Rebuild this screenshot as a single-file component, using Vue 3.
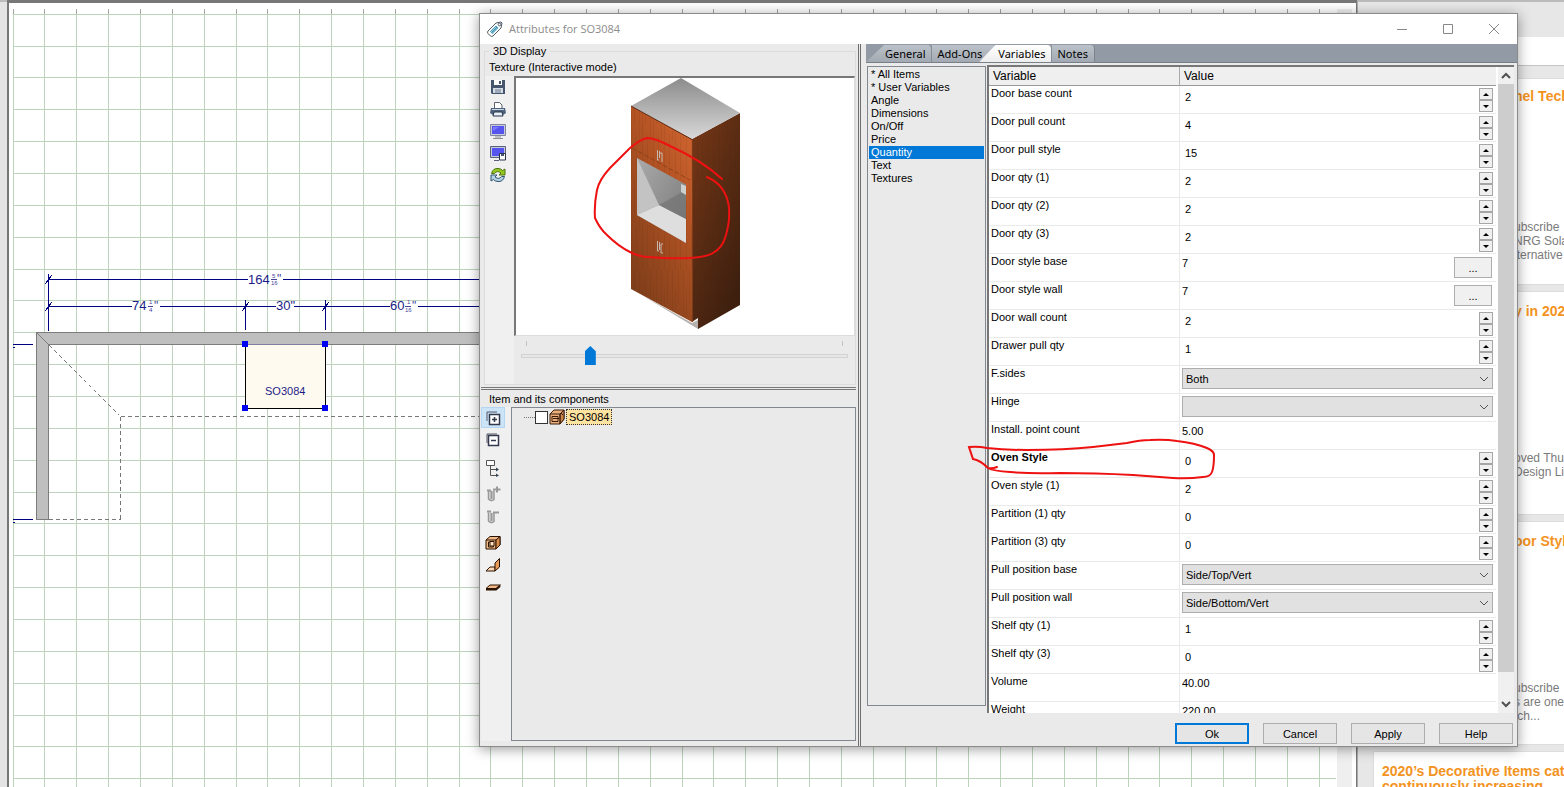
<script setup>
import { ref } from 'vue'

const cell = 31.86
const columns = Array.from({ length: 42 }, (_, i) => Math.floor(13 + i * cell) + 0.5)
const lines = Array.from({ length: 30 }, (_, i) => Math.floor(14.2 + i * cell) + 0.5)

const tabs = ['General', 'Add-Ons', 'Variables', 'Notes']
const groups = ['* All Items', '* User Variables', 'Angle', 'Dimensions', 'On/Off', 'Price', 'Quantity', 'Text', 'Textures']
const rows = ref([
  { name: 'Door base count', kind: 'spin', value: '2' },
  { name: 'Door pull count', kind: 'spin', value: '4' },
  { name: 'Door pull style', kind: 'spin', value: '15' },
  { name: 'Door qty (1)', kind: 'spin', value: '2' },
  { name: 'Door qty (2)', kind: 'spin', value: '2' },
  { name: 'Door qty (3)', kind: 'spin', value: '2' },
  { name: 'Door style base', kind: 'browse', value: '7' },
  { name: 'Door style wall', kind: 'browse', value: '7' },
  { name: 'Door wall count', kind: 'spin', value: '2' },
  { name: 'Drawer pull qty', kind: 'spin', value: '1' },
  { name: 'F.sides', kind: 'select', value: 'Both' },
  { name: 'Hinge', kind: 'select', value: '' },
  { name: 'Install. point count', kind: 'text', value: '5.00' },
  { name: 'Oven Style', kind: 'spin', value: '0', bold: true },
  { name: 'Oven style (1)', kind: 'spin', value: '2' },
  { name: 'Partition (1) qty', kind: 'spin', value: '0' },
  { name: 'Partition (3) qty', kind: 'spin', value: '0' },
  { name: 'Pull position base', kind: 'select', value: 'Side/Top/Vert' },
  { name: 'Pull position wall', kind: 'select', value: 'Side/Bottom/Vert' },
  { name: 'Shelf qty (1)', kind: 'spin', value: '1' },
  { name: 'Shelf qty (3)', kind: 'spin', value: '0' },
  { name: 'Volume', kind: 'text', value: '40.00' },
  { name: 'Weight', kind: 'text', value: '220.00' }
])
const angle = ref(20)
const step = (row, by) => { row.value = String(Number(row.value) + by) }

const news = [
  { title: 'nel Tech', lines: ['ubscribe', 'NRG Sola', 'lternative'] },
  { title: 'y in 2020', lines: ['oved Thu', 'Design Liv'] },
  { title: 'oor Styl', lines: ['ubscribe', 's are one', 'tch...'] }
]
</script>

<template>
  <div class="desk">
    <div class="strip"></div>
    <main class="plan">
      <svg class="drawing" aria-label="Floor plan">
        <g class="grid">
          <line v-for="x in columns" :key="'c' + x" :x1="x" :x2="x" y1="9" y2="100%" />
          <line v-for="y in lines" :key="'r' + y" x1="13" x2="100%" :y1="y" :y2="y" />
        </g>
        <g class="ticks">
          <line v-for="x in columns" :key="'t' + x" :x1="x" :x2="x" y1="9" y2="14" />
        </g>
        <g class="wall">
          <path d="M36.500 332.500H600V344.500H48.500V519.500H36.500ZM36.500 332.500L48.500 344.500" />
        </g>
        <path class="dash" d="M49 345L119 415M120.500 416.500H600M120.500 416.500V519.500M49 519.500H120.500" />
        <path class="unit" d="M245.500 344.500H325.500V408.500H245.500Z" />
        <path class="wall-edge" d="M246 344.500H325" />
        <g class="dim">
          <path d="M48.500 274V331M245.500 300V330M325.500 300V330M49 279.500H248M283 279.500H600M49 306.500H132M160 306.500H276M294 306.500H390M418 306.500H600M13 344.500H33M13 519.500H33M13 347.500H15M13 522.500H15M45 284L52 275M45 311L52 302M242 311L249 302M322 311L329 302" />
        </g>
        <g class="handle">
          <rect x="242" y="341" width="6" height="6" /><rect x="322" y="341" width="6" height="6" />
          <rect x="242" y="405" width="6" height="6" /><rect x="322" y="405" width="6" height="6" />
        </g>
        <g class="figures">
          <text x="248" y="284">164</text><text x="132" y="310">74</text>
          <text x="276" y="310">30"</text><text x="390" y="310">60</text>
          <text class="unit-name" x="265" y="395">SO3084</text>
        </g>
        <g class="fractions">
          <text x="272" y="278">5</text><text x="271" y="285">16</text><text class="inch" x="277" y="283">"</text>
          <text x="149" y="304">1</text><text x="149" y="312">4</text><text class="inch" x="154" y="310">"</text>
          <text x="407" y="304">1</text><text x="405" y="312">16</text><text class="inch" x="412" y="310">"</text>
          <path d="M271 279.500H277M148 306.500H153M405 306.500H411" />
        </g>
      </svg>
      <div class="plan-scroll"></div>
    </main>

    <aside class="side">
      <h2 class="side-title">Shared R</h2>
      <div class="side-band"></div>
      <div class="cards">
        <article v-for="n in news" :key="n.title" class="card">
          <h3><a href="#">{{ n.title }}</a></h3>
          <p><span v-for="l in n.lines" :key="l">{{ l }}</span></p>
        </article>
        <article class="card last">
          <h3><a href="#">2020’s Decorative Items cat<br>continuously increasing</a></h3>
        </article>
      </div>
    </aside>

    <section class="dialog" role="dialog" aria-labelledby="dlg-title">
      <header class="titlebar">
        <svg class="tag" width="18" height="18" viewBox="0 0 18 18">
          <path d="M2 11L10 3L15 2L16 3L15 8L7 16Q5.500 17 4.500 16L2 13.500Q1 12 2 11Z" fill="#fff" stroke="#4e5a66" />
          <path d="M4 11.500L10 5.500L12.500 8L6.500 14Z" fill="#3f93b8" /><path d="M5 12L10 7M6.500 13L11.500 8" stroke="#9ed0e4" />
          <circle cx="13.500" cy="4.500" r="1.300" fill="#fff" stroke="#4e5a66" />
        </svg>
        <h1 id="dlg-title">Attributes for SO3084</h1>
        <button class="win" aria-label="Minimize"><svg width="12" height="12"><path d="M1 6.500H11" /></svg></button>
        <button class="win" aria-label="Maximize"><svg width="12" height="12"><path d="M1.500 1.500H10.500V10.500H1.500Z" /></svg></button>
        <button class="win" aria-label="Close"><svg width="12" height="12"><path d="M1 1L11 11M11 1L1 11" /></svg></button>
      </header>

      <div class="body">
        <div class="left">
          <fieldset class="display">
            <legend>3D Display</legend>
            <p class="mode">Texture (Interactive mode)</p>
            <div class="display-row">
              <div class="tools">
                <button aria-label="Save"><svg width="16" height="16" viewBox="0 0 16 16"><path d="M1 1H15V15H2L1 14Z" fill="#46566e" /><path d="M4 1H12V6H4Z" fill="#fff" /><path d="M9 2H11V5H9Z" fill="#46566e" /><path d="M3 9H13V14H3Z" fill="#d5dbe3" /><path d="M5 11H11M5 13H11" stroke="#6b7b92" /></svg></button>
                <button aria-label="Print"><svg width="16" height="16" viewBox="0 0 16 16"><path d="M4.500 7V1.500H9.500L12 4V7" fill="#fff" stroke="#59636f" /><path d="M1 7H15L16 12L13 14H3L0 12Z" fill="#4f627c" /><path d="M2 8.500H14" stroke="#c9d6e6" /><path d="M4 11H12L13 15H3Z" fill="#e8f0f8" stroke="#26344a" /></svg></button>
                <button aria-label="Monitor"><svg width="16" height="16" viewBox="0 0 16 16"><path d="M.5 1.500H15.500V12.500H.5Z" fill="#c8ccd8" stroke="#8085a0" /><path d="M2 3H14V11H2Z" fill="#5654ee" /><path d="M3 4H9L3 8Z" fill="#7b7aff" /><path d="M5 14H11M3 15.500H13" stroke="#8a8f96" /></svg></button>
                <button aria-label="Save view"><svg width="16" height="16" viewBox="0 0 16 16"><path d="M.5 1.500H15.500V12.500H.5Z" fill="#c8ccd8" stroke="#59607c" /><path d="M2 3H14V11H2Z" fill="#5654ee" /><path d="M4 15.500H9" stroke="#59607c" /><path d="M9.500 8.500H15.500V15H9.500Z" fill="#fff" stroke="#28334a" /><path d="M11 9H14V11H11Z" fill="#46566e" /></svg></button>
                <button aria-label="Refresh"><svg width="16" height="16" viewBox="0 0 16 16"><path d="M1.500 6.500Q3 1 8 1.500Q11 1.500 12.500 3.500L15 2V8H9L11 6Q7 3 4.500 6.500Z" fill="#94c81e" stroke="#4c7410" /><path d="M14.500 9.500Q13 15 8 14.500Q5 14.500 3.500 12.500L1 14V8H7L5 10Q9 13 11.500 9.500Z" fill="#b4d2e6" stroke="#35556d" /></svg></button>
              </div>
              <div class="stage">
                <div class="view">
                  <svg width="338" height="257" viewBox="0 0 338 257" aria-label="Oven cabinet">
                    <defs>
                      <linearGradient id="top" x1="0" y1="0" x2="0" y2="1"><stop offset="0" stop-color="#8c8c8c" /><stop offset="1" stop-color="#d8d8d8" /></linearGradient>
                      <linearGradient id="front" x1="0.800" y1="0" x2="0.200" y2="1"><stop offset="0" stop-color="#cf6530" /><stop offset=".3" stop-color="#b75525" /><stop offset="1" stop-color="#7a3c19" /></linearGradient>
                      <linearGradient id="right" x1="0" y1="0" x2=".6" y2="1"><stop offset="0" stop-color="#7a3817" /><stop offset=".5" stop-color="#5a2c13" /><stop offset="1" stop-color="#3f200f" /></linearGradient>
                      <linearGradient id="inner" x1="0" y1="0" x2="1" y2="1"><stop offset="0" stop-color="#aaa" /><stop offset="1" stop-color="#777" /></linearGradient>
                      <pattern id="grain" width="11" height="90" patternUnits="userSpaceOnUse"><path d="M1.500 0V50M4.500 20V90M7.500 0V34M9.500 45V90" stroke="#3a1400" opacity=".08" /></pattern>
                    </defs>
                    <g transform="translate(-516 -78)">
                      <path d="M640 294L698 329L698 320L692 323Z" fill="#b5b2ae" />
                      <path d="M692 139L740 113V305L698 329V318L692 322Z" fill="url(#right)" />
                      <path d="M692 139L740 113V305L698 329V318L692 322Z" fill="url(#grain)" />
                      <path d="M631 106L692 139V322L631 289Z" fill="url(#front)" />
                      <path d="M631 106L692 139V322L631 289Z" fill="url(#grain)" />
                      <path d="M681 78L740 113L692 139L631 106Z" fill="url(#top)" />
                      <path d="M631 106L692 139.500" stroke="#5a2a12" fill="none" />
                      <path d="M692.500 140V322" stroke="#7c3a18" fill="none" />
                      <path d="M632 148L690 180" stroke="#7f3513" fill="none" stroke-dasharray="5 2" opacity=".6" />
                      <path d="M637 158L686 184.500V243L637 215Z" fill="url(#inner)" />
                      <path d="M637 158L659 205L637 215Z" fill="#c3c3c3" />
                      <path d="M637 215L659 205L686 219V243Z" fill="#dedede" />
                      <path d="M659 205L686 190V219Z" fill="#737373" opacity=".7" />
                      <path d="M681 184L686 186V195L681 192Z" fill="#ccd0cf" />
                      <g fill="none" stroke="#c5b7af"><path d="M657.500 150V160H659M659.500 151V158M662 153V162M660 153H662" /><path d="M657.500 241V251H659M659.500 242V250M663 244H661V253H663" /></g>
                    </g>
                  </svg>
                </div>
                <div class="slider">
                  <div class="marks"><i></i><i></i></div>
                  <input v-model="angle" type="range" min="0" max="100" aria-label="View angle">
                </div>
              </div>
            </div>
          </fieldset>

          <fieldset class="items">
            <legend>Item and its components</legend>
            <div class="items-row">
              <div class="tools tall">
                <button class="on" aria-label="Expand all"><svg width="16" height="16" viewBox="0 0 16 16"><path d="M2 11V2H12" fill="none" stroke="#556" /><path d="M4.500 4.500H14.500V14.500H4.500Z" fill="#fff" stroke="#333a4d" stroke-width="1.500" /><path d="M7 9.500H12M9.500 7V12" stroke="#333a4d" stroke-width="1.500" /></svg></button>
                <button aria-label="Collapse all"><svg width="16" height="16" viewBox="0 0 16 16"><path d="M2 11V2H12" fill="none" stroke="#556" /><path d="M3.500 3.500H13.500V13.500H3.500Z" fill="#fff" stroke="#333a4d" stroke-width="1.500" /><path d="M6 8.500H11" stroke="#333a4d" stroke-width="1.500" /></svg></button>
                <button class="gap" aria-label="Structure"><svg width="16" height="18" viewBox="0 0 16 18"><path d="M1.500 1.500H9.500V6.500H1.500Z" fill="#fff" stroke="#555" /><path d="M5.500 7V16.500H13M5.500 10.500H13" fill="none" stroke="#555" /><path d="M11 8.500L14 10.500L11 12.500ZM11 14.500L14 16.500L11 18Z" fill="#345" /></svg></button>
                <button class="gap" aria-label="Add hardware"><svg width="16" height="16" viewBox="0 0 16 16"><path d="M3.500 4.500V13Q6 16 9 13.500V4.500" fill="#ddd" stroke="#999" stroke-width="1.500" /><path d="M6.500 5V13M2 4.500H6M8 3.500H15.500M12 .5V6.500" fill="none" stroke="#999" stroke-width="2" /></svg></button>
                <button aria-label="Remove hardware"><svg width="16" height="16" viewBox="0 0 16 16"><path d="M3.500 4.500V13Q6 16 9 13.500V4.500" fill="#ddd" stroke="#999" stroke-width="1.500" /><path d="M6.500 5V13M2 3.500H6M8 4.500H14" fill="none" stroke="#999" stroke-width="2" /></svg></button>
                <button class="gap" aria-label="Box"><svg width="16" height="16" viewBox="0 0 16 16" stroke="#2a1200" stroke-linejoin="round"><path d="M1 5L5 1.500H15V10L11 14H1Z" fill="#f0b987" /><path d="M1 5H11V14M11 5L15 1.500M3.500 7H8.500V12H3.500Z" fill="none" /><path d="M11 5L15 1.500V10L11 14Z" fill="#d98e4c" /><path d="M5 6.500H9V11H5Z" fill="#ffe2c4" /></svg></button>
                <button aria-label="Corner"><svg width="16" height="16" viewBox="0 0 16 16" stroke="#2a1200" stroke-linejoin="round"><path d="M1 14L5 10H10V14Z" fill="#ffd9b5" /><path d="M10 14V6L14.500 1.500V10Z" fill="#e89a58" /></svg></button>
                <button aria-label="Panel"><svg width="16" height="16" viewBox="0 0 16 16" stroke="#2a1200" stroke-linejoin="round"><path d="M1 9.500L5 6H15.500L11 9.500Z" fill="#f2b988" /><path d="M1 10.500H11L15 7" fill="none" stroke-width="2" /></svg></button>
              </div>
              <div class="tree" role="tree">
                <label class="node"><i></i><input type="checkbox">
                  <svg width="16" height="16" viewBox="0 0 16 16" stroke="#3a1c08" stroke-linejoin="round"><path d="M1 5L5 1H15V10L11 15H1Z" fill="#eab07c" /><path d="M11 5L15 1V10L11 15Z" fill="#cc8447" /><path d="M1 5H11V15M3 7.500H9V12.500H3ZM4 9.500H10M12 4L14 6" fill="none" /></svg>
                  <span>SO3084</span></label>
              </div>
            </div>
          </fieldset>
        </div>

        <div class="right">
          <nav class="tabs" role="tablist">
            <button v-for="t in tabs" :key="t" role="tab" :class="['tab', t.toLowerCase()]">{{ t }}</button>
          </nav>
          <div class="pane">
            <ul class="groups">
              <li v-for="g in groups" :key="g" :class="{ picked: g === 'Quantity' }">{{ g }}</li>
            </ul>
            <div class="sheet">
              <div class="sheet-view">
                <table>
                  <thead><tr><th>Variable</th><th>Value</th></tr></thead>
                  <tbody>
                    <tr v-for="(r, i) in rows" :key="r.name">
                      <td class="name" :class="{ bold: r.bold }"><label :for="'v' + i">{{ r.name }}</label></td>
                      <td>
                        <div v-if="r.kind === 'spin'" class="spin">
                          <input :id="'v' + i" v-model="r.value" type="text">
                          <span class="arrows">
                            <button :aria-label="'Increase ' + r.name" @click="step(r, 1)"><svg width="6" height="3"><path d="M0 3L3 0L6 3Z" /></svg></button>
                            <button :aria-label="'Decrease ' + r.name" @click="step(r, -1)"><svg width="6" height="3"><path d="M0 0L3 3L6 0Z" /></svg></button>
                          </span>
                        </div>
                        <div v-else-if="r.kind === 'select'" class="pick">
                          <select :id="'v' + i" v-model="r.value"><option>{{ r.value }}</option></select>
                          <svg width="10" height="6"><path d="M1 1L5 5L9 1" /></svg>
                        </div>
                        <div v-else class="plain">
                          <input :id="'v' + i" v-model="r.value" type="text">
                          <button v-if="r.kind === 'browse'" :aria-label="'Browse ' + r.name">...</button>
                        </div>
                      </td>
                    </tr>
                  </tbody>
                </table>
              </div>
              <div class="bar">
                <button aria-label="Scroll up"><svg width="10" height="7"><path d="M1 6L5 2L9 6" /></svg></button>
                <div class="bar-track"><div class="bar-thumb"></div></div>
                <button aria-label="Scroll down"><svg width="10" height="7"><path d="M1 1L5 5L9 1" /></svg></button>
              </div>
            </div>
          </div>
          <footer class="actions">
            <button class="main">Ok</button><button>Cancel</button><button>Apply</button><button>Help</button>
          </footer>
        </div>
      </div>
    </section>

    <svg class="marker">
      <path d="M722 179C708 166 690 155 670 146Q655 138 647 138Q641 139 630 148L610 168Q599 180 597 190Q594 205 595 218Q600 229 607 235Q618 246 630 252Q640 257 648 257Q670 259 690 258Q706 257 713 253Q722 248 725 238Q730 224 729 208Q728 198 723 190Q718 182 707 177" />
      <path d="M997 467Q992 469 988 468Q980 460 973 459L969 447Q978 446 987 448Q1005 450 1027 450Q1065 450 1093 447L1127 443Q1140 440 1150 440Q1165 439 1177 441Q1195 443 1207 448Q1214 451 1214 455Q1214 467 1212 472Q1210 477 1203 477Q1188 479 1173 478L1133 475Q1095 473 1060 473Q1030 474 1010 472Q993 471 988 468" />
    </svg>
  </div>
</template>

<style>
body { margin: 0; }
</style>

<style scoped>
* { box-sizing: border-box; }
.desk { position: relative; display: flex; height: 100vh; overflow: hidden; background: #fff; font: 12px/14px "Liberation Sans", Arial, sans-serif; color: #000; }
button, input, select { font: inherit; color: inherit; margin: 0; padding: 0; border: 0; background: none; border-radius: 0; }
h1, h2, h3, p, ul { margin: 0; padding: 0; font-weight: normal; }
.strip { width: 7px; background: #e4e4e4; border-top: 2px solid #bbb; }
.plan { flex: 1; display: flex; border: 2px solid #777; border-width: 3px 1px 0 2px; padding-right: 4px; }
.drawing { position: absolute; inset: 0; width: calc(100% - 228px); height: 100%; shape-rendering: crispEdges; }
.grid line { stroke: #bcd3bc; }
.ticks line { stroke: #a5a5a5; }
.wall path { fill: #bfbfbf; stroke: #7d7d7d; }
.wall-edge { stroke: #8080a0; }
.dash { fill: none; stroke: #777; stroke-dasharray: 4 3; }
.unit { fill: #fffaf0; stroke: #000; }
.dim path { fill: none; stroke: #000080; }
.handle { fill: #0000f0; }
.figures { fill: #1c1c88; font-size: 13px; }
.unit-name { font-size: 11px; }
.fractions { fill: #44449a; stroke: none; font-size: 6px; }
.fractions path { stroke: #44449a; }
.inch { font-size: 12px; }
.plan-scroll { width: 15px; margin-left: auto; margin-top: 6px; background: #efefef; }
.side { width: 207px; background: #e7e7e7; border-left: 1px solid #aaa; border-top: 2px solid #bbb; display: flex; flex-direction: column; }
.side-title { flex: none; height: 35px; padding: 8px 0 0 13px; font-size: 13px; font-weight: bold; line-height: 16px; color: #333; }
.side-band { flex: none; height: 29px; background: #fff; border-bottom: 1px solid #c4c4c4; }
.cards { flex: none; padding: 12px 0 0 15px; display: flex; flex-direction: column; gap: 6px; }
.card { height: 224px; flex: none; background: #fff; padding: 12px 0 0 140px; overflow: hidden; white-space: nowrap; display: flex; flex-direction: column; border: 1px solid #ddd; border-right: 0; }
.card:first-child { height: 207px; padding-top: 10px; }
.card h3 { font-size: 14px; line-height: 15px; font-weight: bold; }
.card a { color: #f39322; text-decoration: none; }
.card p { margin-top: 132px; color: #7b7b7b; display: flex; flex-direction: column; }
.card:first-child p { margin-top: 116px; }
.card.last { padding: 12px 0 0 8px; }

.dialog { position: absolute; left: 479px; top: 13px; right: 46px; bottom: 40px; display: flex; flex-direction: column; background: #eaeaea; border: 1px solid #8b8b8b; box-shadow: 0 2px 12px rgba(0, 0, 0, .4); font-size: 11px; }
.titlebar { display: flex; align-items: center; height: 30px; background: #fff; padding-left: 6px; }
.titlebar h1 { flex: 1; margin-left: 5px; font: 11px/16px "Open Sans", "Noto Sans", sans-serif; color: #8c8c8c; }
.win { width: 46px; height: 30px; display: grid; place-items: center; }
.win svg { fill: none; stroke: #888; }
.body { flex: 1; display: flex; min-height: 0; }
.left { width: 381px; display: flex; flex-direction: column; border-right: 3px double #6e6e6e; }
fieldset { margin: 0; padding: 0; border: 0; min-width: 0; }
.display { margin: 0 2px 0 4px; height: 341px; border: 1px solid #dcdcdc; }
legend { margin-left: 4px; padding: 0 4px; line-height: 14px; }
.mode { padding: 2px 0 0 4px; line-height: 14px; }
.display-row { display: flex; padding-top: 2px; }
.tools { width: 30px; padding: 3px 4px 0 0; background: #f0f0f0; display: flex; flex-direction: column; align-items: center; gap: 6px; }
.tools button { width: 16px; height: 16px; flex: none; }
.tools svg, .node svg { display: block; }
.stage { flex: 1; }
.view { height: 260px; overflow: hidden; background: #fff; border: 1px solid #ddd; border-top: 2px solid #777; border-left: 2px solid #777; }
.slider { padding: 5px 7px 0; height: 48px; }
.marks { display: flex; justify-content: space-between; padding: 0 5px; height: 5px; }
.marks i { width: 1px; background: #c4c4c4; }
.slider input { appearance: none; display: block; width: 100%; height: 20px; }
.slider input::-webkit-slider-runnable-track { height: 4px; background: #e7e7e7; border: 1px solid #d3d3d3; }
.slider input::-webkit-slider-thumb { appearance: none; width: 11px; height: 19px; margin-top: -9px; background: #0078d7; clip-path: polygon(50% 0, 100% 28%, 100% 100%, 0 100%, 0 28%); }
.items { flex: 1; margin: 2px 2px 3px 1px; border-top: 3px double #777; }
.items legend { float: left; padding-top: 2px; }
.items-row { display: flex; clear: both; height: 335px; padding-top: 1px; }
.tools.tall { padding: 0 6px 0 0; }
.tall .on { width: 24px; height: 21px; background: #cce4f7; border: 1px solid #b5d6f2; display: grid; place-items: center; margin-bottom: -2px; }
.tall .gap { margin-top: 5px; }
.tree { flex: 1; border: 1px solid #828790; padding: 1px 0 0 12px; }
.node { display: flex; align-items: center; }
.node i { width: 11px; border-top: 1px dotted #777; }
.node input { appearance: none; width: 13px; height: 13px; border: 1px solid #333; background: #fff; margin-right: 1px; }
.node span { margin-left: 1px; padding: 0 2px; border: 1px dotted #333; background: #ffe3a0; line-height: 14px; }

.right { flex: 1; min-width: 0; margin-left: 5px; display: flex; flex-direction: column; }
.tabs { height: 19px; background: #929ba5; display: flex; align-items: flex-end; border-bottom: 1px solid #777f88; }
.tab { height: 17px; padding: 0 6px; font: 11px/16px "Noto Sans", sans-serif; background: linear-gradient(#bcc2c9, #a2a9b2); border-right: 1px solid #7b838c; border-radius: 0 4px 0 0; }
.tab.general { padding: 0 5px 0 19px; clip-path: polygon(18px 0, 100% 0, 100% 100%, 0 100%); }
.tab.add-ons { padding-right: 14px; }
.tab.variables { margin-left: -18px; padding: 0 5px 0 19px; background: linear-gradient(#fff, #ededed); clip-path: polygon(16px 0, 100% 0, 100% 100%, 0 100%); }
.pane { flex: 1; display: flex; min-height: 0; gap: 1px; padding-top: 2px; }
.groups { width: 119px; margin: 1px 0 7px 1px; padding: 1px; border: 1px solid #828790; list-style: none; line-height: 13px; }
.groups li { padding: 0 2px; height: 13px; }
.groups .picked { background: #0078d7; color: #fff; }
.sheet { flex: 1; min-width: 0; display: flex; border: 1px solid #777; border-width: 2px 0 0 2px; margin-right: 3px; background: #fff; }
.sheet-view { flex: 1; min-width: 0; overflow: hidden; }
table { width: 100%; border-collapse: separate; border-spacing: 0; table-layout: fixed; }
th { height: 19px; padding: 0 4px; background: #efefef; border-bottom: 1px solid #999; text-align: left; font-size: 12px; font-weight: normal; }
th:first-child { width: 191px; border-right: 1px solid #aaa; }
td { height: 28px; padding: 0 2px; border-bottom: 1px solid #eaeaea; vertical-align: top; }
.name { border-right: 1px solid #eaeaea; line-height: 14px; }
.name.bold { font-weight: bold; }
.spin { display: flex; padding-top: 2px; }
.spin input { flex: 1; min-width: 0; height: 18px; padding-left: 3px; }
.arrows { display: flex; flex-direction: column; margin-right: 1px; }
.arrows button { width: 14px; height: 12px; background: #f0f0f0; border: 1px solid #a6a6a6; display: grid; place-items: center; }
.pick { display: flex; align-items: center; padding-top: 2px; margin-right: 1px; }
.pick select { appearance: none; width: 100%; height: 21px; padding-left: 3px; background: #e1e1e1; border: 1px solid #adadad; }
.pick svg { margin-left: -14px; margin-right: 4px; fill: none; stroke: #555; pointer-events: none; }
.plain { display: flex; justify-content: space-between; }
.plain input { width: 80px; height: 18px; }
.plain button { width: 38px; height: 21px; margin: 3px 2px 0 0; background: #f0f0f0; border: 1px solid #adadad; }
.bar { width: 18px; display: flex; flex-direction: column; background: #f0f0f0; border-left: 2px solid #fff; }
.bar button { height: 17px; display: grid; place-items: center; }
.bar button svg { fill: none; stroke: #505050; stroke-width: 2; }
.bar-track { flex: 1; }
.bar-thumb { height: 96%; background: #cdcdcd; }
.actions { display: flex; justify-content: flex-end; gap: 14px; padding: 10px 4px 2px 0; }
.actions button { width: 74px; height: 21px; background: #e5e5e5; border: 1px solid #adadad; }
.actions .main { border: 2px solid #0078d7; }
.marker { position: absolute; inset: 0; width: 100%; height: 100%; pointer-events: none; fill: none; stroke: #ee1111; stroke-width: 2; stroke-linecap: round; }
</style>
